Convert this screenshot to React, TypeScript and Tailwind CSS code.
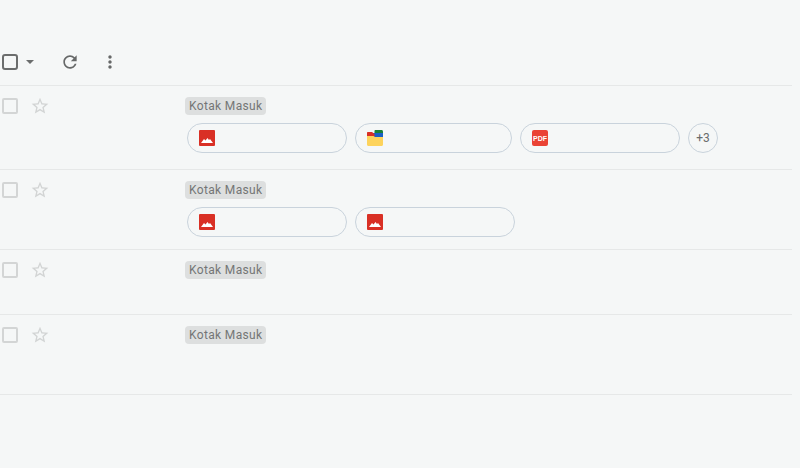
function MaterialIcon({ d, className }: { d: string; className: string }) {
  return (
    <svg width="20" height="20" viewBox="0 0 24 24" fill="currentColor" className={`shrink-0 ${className}`}>
      <path d={d} />
    </svg>
  )
}

const REFRESH = 'M17.65 6.35C16.2 4.9 14.21 4 12 4c-4.42 0-7.99 3.58-7.99 8s3.57 8 7.99 8c3.73 0 6.84-2.55 7.73-6h-2.08c-.82 2.33-3.04 4-5.65 4-3.31 0-6-2.69-6-6s2.69-6 6-6c1.66 0 3.14.69 4.22 1.78L13 11h7V4l-2.35 2.35z'
const MORE = 'M12 8c1.1 0 2-.9 2-2s-.9-2-2-2-2 .9-2 2 .9 2 2 2zm0 2c-1.1 0-2 .9-2 2s.9 2 2 2 2-.9 2-2-.9-2-2-2zm0 6c-1.1 0-2 .9-2 2s.9 2 2 2 2-.9 2-2-.9-2-2-2z'
const STAR = 'M22 9.24l-7.19-.62L12 2 9.19 8.63 2 9.24l5.46 4.73L5.82 21 12 17.27 18.18 21l-1.63-7.03L22 9.24zM12 15.4l-3.76 2.27 1-4.28-3.32-2.88 4.38-.38L12 6.1l1.71 4.04 4.38.38-3.32 2.88 1 4.28L12 15.4z'

function ImageIcon() {
  return (
    <svg width="16" height="16" viewBox="0 0 16 16" className="shrink-0">
      <rect width="16" height="16" rx="1" fill="#d93025" />
      <path d="M2 13 L5 9 L6.5 10.5 L8.5 8 L10 10 L11 9 L14 13 Z" fill="#fff" />
    </svg>
  )
}

function FolderIcon() {
  return (
    <svg width="16" height="16" viewBox="0 0 16 16" className="shrink-0">
      <path d="M7.5 3 L7.5 1 C7.5 0.4 7.9 0 8.5 0 L14.5 0 C15.4 0 16 0.6 16 1.5 L16 4 L7.5 4 Z" fill="#188038" />
      <path d="M5 3 L16 3 L16 8 L5 8 Z" fill="#1a5fc4" />
      <path d="M0 3 C0 2.4 0.4 2 1 2 L5 2 L7.5 4 L7.5 6.5 L0 6.5 Z" fill="#d93025" />
      <path d="M0 6 L6.5 6 L8 7 L16 7 L16 14.5 C16 15.4 15.4 16 14.5 16 L1.5 16 C0.6 16 0 15.4 0 14.5 Z" fill="#fdd35c" />
    </svg>
  )
}

function PdfIcon() {
  return (
    <div className="w-4 h-4 shrink-0 rounded-[2px] bg-[#ea4335] flex items-center justify-center text-white text-[7px] leading-none font-bold font-['Liberation_Sans',sans-serif]">
      PDF
    </div>
  )
}

function Chip({ icon, width }: { icon: React.ReactNode; width: string }) {
  return (
    <div className={`h-[30px] ${width} shrink-0 rounded-full border border-[#c9d3dc] flex items-center pl-[11px]`}>
      {icon}
    </div>
  )
}

function Row({ height, children }: { height: string; children?: React.ReactNode }) {
  return (
    <div className={`${height} w-[792px] border-b border-[#e6e8e8] flex items-start`}>
      <div className="w-4 h-4 ml-[2px] mt-3 rounded-[2px] border-2 border-[#d3d5d5] shrink-0" />
      <MaterialIcon d={STAR} className="ml-3 mt-[10px] text-[#d2d4d4]" />
      <div className="ml-[135px] mt-[11px] flex flex-col items-start">
        <span className="h-[18px] px-1 rounded-[4px] bg-[#dddfdf] text-[12px] leading-[18px] tracking-[0.35px] text-[#747676]">Kotak Masuk</span>
        {children}
      </div>
    </div>
  )
}

export default function App() {
  return (
    <div className="w-[800px] h-[468px] overflow-hidden bg-[#f5f7f7] font-['Roboto',sans-serif]">
      {/* Toolbar */}
      <div className="h-[86px] w-[792px] border-b border-[#e6e8e8] flex items-start pt-[52px]">
        <div className="w-4 h-4 ml-[2px] mt-[2px] rounded-[3px] border-2 border-[#6b6d6d]" />
        <div className="ml-2 mt-2 w-0 h-0 border-x-4 border-x-transparent border-t-4 border-t-[#6b6d6d]" />
        <MaterialIcon d={REFRESH} className="ml-[26px] text-[#666868]" />
        <MaterialIcon d={MORE} className="ml-5 text-[#666868]" />
      </div>

      <Row height="h-[84px]">
        <div className="mt-[8px] ml-[2px] flex items-center gap-2">
          <Chip width="w-[160px]" icon={<ImageIcon />} />
          <Chip width="w-[157px]" icon={<FolderIcon />} />
          <Chip width="w-[160px]" icon={<PdfIcon />} />
          <div className="w-[30px] h-[30px] rounded-full border border-[#c9d3dc] flex items-center justify-center text-[12px] text-[#6a6c6c]">+3</div>
        </div>
      </Row>
      <Row height="h-[80px]">
        <div className="mt-[8px] ml-[2px] flex items-center gap-2">
          <Chip width="w-[160px]" icon={<ImageIcon />} />
          <Chip width="w-[160px]" icon={<ImageIcon />} />
        </div>
      </Row>
      <Row height="h-[65px]" />
      <Row height="h-[80px]" />
    </div>
  )
}
